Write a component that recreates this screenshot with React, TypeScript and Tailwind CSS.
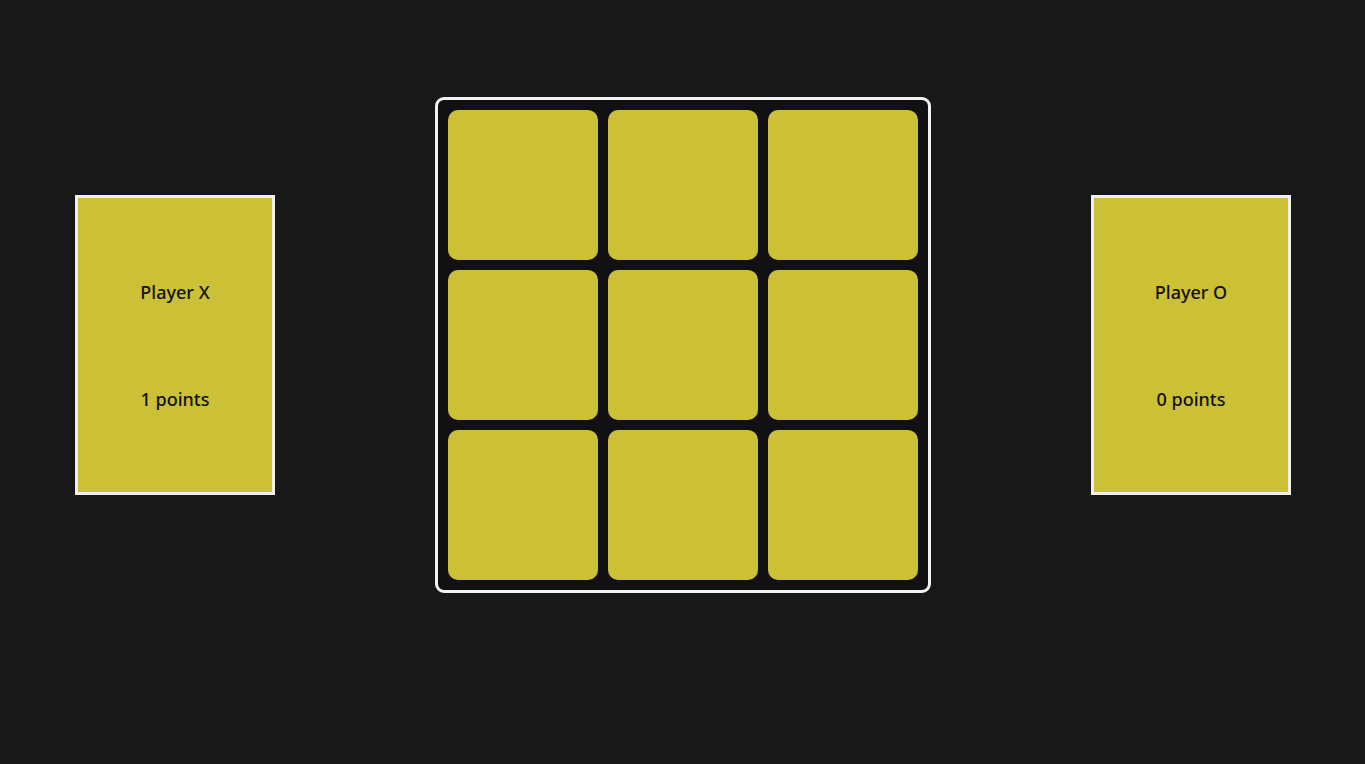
const cells = Array.from({ length: 9 }, (_, i) => i)

function PlayerCard({ name, points }: { name: string; points: number }) {
  return (
    <div className="flex h-[300px] w-[200px] flex-col items-center justify-evenly border-[3px] border-[#efefef] bg-[#cbc036] pt-[2px] text-[18px] font-medium text-[#111]">
      <p>{name}</p>
      <p>{points} points</p>
    </div>
  )
}

export default function App() {
  return (
    <div
      className="flex min-h-[764px] w-full items-start justify-between bg-[#181818] pl-[75px] pr-[74px] pt-[97px]"
      style={{ fontFamily: '"Noto Sans", "Open Sans", sans-serif' }}
    >
      <div className="flex h-[496px] items-center">
        <PlayerCard name="Player X" points={1} />
      </div>

      <div className="grid grid-cols-[repeat(3,150px)] gap-[10px] rounded-[9px] border-[3px] border-[#f2f2f2] bg-[#111111] p-[10px]">
        {cells.map((i) => (
          <button key={i} className="h-[150px] w-[150px] rounded-[10px] bg-[#cbc036]" />
        ))}
      </div>

      <div className="flex h-[496px] items-center">
        <PlayerCard name="Player O" points={0} />
      </div>
    </div>
  )
}
